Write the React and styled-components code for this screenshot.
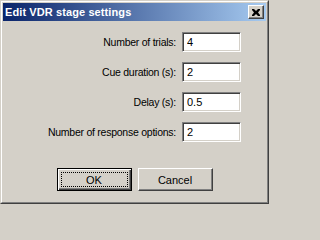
import React from "react";
import styled, { createGlobalStyle } from "styled-components";

const GlobalStyle = createGlobalStyle`
  html, body {
    margin: 0;
    padding: 0;
    background: #d4d0c8;
  }
  * {
    box-sizing: border-box;
  }
`;

const Window = styled.div`
  width: 269px;
  height: 204px;
  background: #d4d0c8;
  border-top: 1px solid #d4d0c8;
  border-left: 1px solid #d4d0c8;
  border-right: 1px solid #404040;
  border-bottom: 1px solid #404040;
  display: flex;
  flex-direction: column;
  font-family: "Liberation Sans", Arial, sans-serif;
  font-size: 11px;
  color: #000;
`;

const Frame = styled.div`
  flex: 1;
  display: flex;
  flex-direction: column;
  border-top: 1px solid #fff;
  border-left: 1px solid #fff;
  border-right: 1px solid #808080;
  border-bottom: 1px solid #808080;
  padding: 1px;
`;

const TitleBar = styled.div`
  height: 18px;
  display: flex;
  align-items: center;
  justify-content: space-between;
  padding: 0 2px 0 2px;
  background: linear-gradient(to right, #0a246a, #a6caf0);
  color: #fff;
`;

const Title = styled.span`
  font-family: "Liberation Sans", Arial, sans-serif;
  font-weight: bold;
  font-size: 11px;
  letter-spacing: 0.1px;
  white-space: nowrap;
`;

const CloseButton = styled.button`
  width: 16px;
  height: 14px;
  padding: 0;
  display: flex;
  align-items: center;
  justify-content: center;
  background: #d4d0c8;
  border: 1px solid;
  border-color: #fff #404040 #404040 #fff;
  box-shadow: inset -1px -1px 0 #808080;
`;

const Form = styled.div`
  display: grid;
  grid-template-columns: 1fr 59px;
  column-gap: 6px;
  row-gap: 10px;
  align-items: center;
  padding: 11px 25px 0 0;
`;

const Label = styled.label`
  text-align: right;
  white-space: nowrap;
  font-size: 10.5px;
  letter-spacing: -0.25px;
`;

const Field = styled.input`
  height: 20px;
  width: 59px;
  margin: 0;
  padding: 0 4px;
  font-family: inherit;
  font-size: 11px;
  color: #000;
  background: #fff;
  border: 1px solid;
  border-color: #808080 #fff #fff #808080;
  box-shadow: inset 1px 1px 0 #404040, inset -1px -1px 0 #d4d0c8;
  outline: none;
`;

const Buttons = styled.div`
  display: flex;
  justify-content: center;
  gap: 6px;
  margin-top: 26px;
`;

const Button = styled.button`
  width: 75px;
  height: 23px;
  padding: 0;
  position: relative;
  font-family: inherit;
  font-size: 11px;
  color: #000;
  background: #d4d0c8;
  border: 1px solid;
  border-color: ${(p) => (p.$default ? "#000" : "#fff #404040 #404040 #fff")};
  box-shadow: ${(p) =>
    p.$default
      ? "inset 1px 1px 0 #fff, inset -1px -1px 0 #404040, inset -2px -2px 0 #808080"
      : "inset -1px -1px 0 #808080"};
`;

const Focus = styled.span`
  position: absolute;
  inset: 3px;
  border: 1px dotted #000;
  display: flex;
  align-items: center;
  justify-content: center;
`;

const fields = [
  { label: "Number of trials:", value: "4" },
  { label: "Cue duration (s):", value: "2" },
  { label: "Delay (s):", value: "0.5" },
  { label: "Number of response options:", value: "2" },
];

export default function App() {
  return (
    <>
      <GlobalStyle />
      <Window>
        <Frame>
          <TitleBar>
            <Title>Edit VDR stage settings</Title>
            <CloseButton aria-label="Close">
              <svg width="8" height="7" viewBox="0 0 8 7">
                <path
                  d="M0 0h2l2 2 2-2h2v1L6 3.5 8 6v1H6L4 5 2 7H0V6l2-2.5L0 1z"
                  fill="#000"
                />
              </svg>
            </CloseButton>
          </TitleBar>
          <Form>
            {fields.map((f) => (
              <React.Fragment key={f.label}>
                <Label>{f.label}</Label>
                <Field defaultValue={f.value} />
              </React.Fragment>
            ))}
          </Form>
          <Buttons>
            <Button $default>
              <Focus>OK</Focus>
            </Button>
            <Button>Cancel</Button>
          </Buttons>
        </Frame>
      </Window>
    </>
  );
}
